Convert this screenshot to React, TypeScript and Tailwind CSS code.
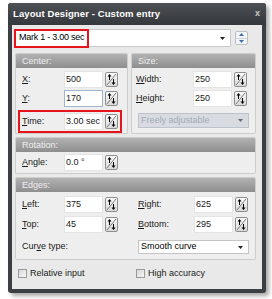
function Spin() {
  return (
    <div className="w-[13px] h-[15px] shrink-0 rounded-[2px] border border-[#8e8e8e] bg-gradient-to-b from-[#fbfbfb] to-[#d9d9d9]">
      <svg width="11" height="13" viewBox="0 0 11 13" className="block">
        <line x1="1" y1="12" x2="10" y2="1" stroke="#7a7a7a" strokeWidth="1" />
        <path d="M3.5 1 L1.5 3.5 L5.5 3.5 Z" fill="#000" />
        <line x1="3.5" y1="3" x2="3.5" y2="7" stroke="#000" strokeWidth="1" />
        <path d="M7.5 12 L5.5 9.5 L9.5 9.5 Z" fill="#000" />
        <line x1="7.5" y1="6" x2="7.5" y2="10" stroke="#000" strokeWidth="1" />
      </svg>
    </div>
  );
}

function Input({ value, focused }: { value: string; focused?: boolean }) {
  return (
    <div
      className={
        focused
          ? "w-[39px] h-[17px] bg-white border border-[#9fb6cf] pl-[1px] leading-[15px] whitespace-nowrap"
          : "w-[39px] h-[17px] bg-white border border-[#e4e4e4] pl-[1px] leading-[15px] whitespace-nowrap"
      }
    >
      {value}
    </div>
  );
}

function Row({
  label,
  u,
  rest,
  value,
  lw,
  focused,
}: {
  label?: string;
  u: string;
  rest: string;
  value: string;
  lw: string;
  focused?: boolean;
}) {
  return (
    <div className="flex items-center h-[17px]">
      <span className={lw}>
        {label}
        <span className="underline">{u}</span>
        {rest}
      </span>
      <Input value={value} focused={focused} />
      <div className="ml-[2px]">
        <Spin />
      </div>
    </div>
  );
}

function Header({ title }: { title: string }) {
  return (
    <div className="h-[14px] bg-gradient-to-b from-[#b2b2b2] to-[#8e8e8e] text-[#eeeeee] pl-[6px] leading-[14px]">
      {title}
    </div>
  );
}

function Combo({ text, disabled }: { text: string; disabled?: boolean }) {
  return (
    <div
      className={
        disabled
          ? "w-[111px] h-[15px] flex items-center justify-between pl-[2px] pr-[5px] border border-[#bcc3ca] bg-[#d8dce1] text-[#a3abb3]"
          : "w-[111px] h-[14px] flex items-center justify-between pl-[2px] pr-[5px] border border-[#c4c4c4] bg-white text-black"
      }
    >
      <span>{text}</span>
      <svg width="5" height="3" viewBox="0 0 5 3">
        <path d="M0 0 L5 0 L2.5 3 Z" fill={disabled ? "#6a6a6a" : "#222"} />
      </svg>
    </div>
  );
}

function Check({ label }: { label: string }) {
  return (
    <div className="flex items-center gap-[3px]">
      <div className="w-[9px] h-[9px] border border-[#9a9a9a] bg-gradient-to-br from-[#d6d6d6] to-[#f8f8f8]" />
      <span>{label}</span>
    </div>
  );
}

export default function App() {
  return (
    <div className="w-[272px] h-[299px] bg-white pl-[8px] pt-[3px] font-['Liberation_Sans',Arial,sans-serif] text-[9px] text-[#1a1a1a]">
      <div className="w-[258px] h-[290px] rounded-[3px] bg-[#3b3e43] shadow-[3px_3px_4px_rgba(0,0,0,0.35)] flex flex-col">
        {/* title bar */}
        <div className="h-[22px] flex items-center justify-between pl-[5px] pr-[6px] bg-gradient-to-b from-[#4d5055] to-[#34373b] rounded-t-[3px]">
          <span className="text-white font-bold text-[9.5px] tracking-[0.1px]">Layout Designer - Custom entry</span>
          <span className="text-[#c9cbcd] font-bold text-[9px]">x</span>
        </div>

        {/* client area */}
        <div className="mx-[4px] mb-[4px] flex-1 bg-[#e9e9e9] pt-[4px] flex flex-col">
          {/* top combo */}
          <div className="flex items-center">
            <div className="relative ml-[2px] w-[217px] h-[18px] bg-white border border-[#c9c9c9] flex items-center justify-between pl-[4px] pr-[5px]">
              <span className="text-black tracking-[-0.25px]">Mark 1 - 3.00 sec</span>
              <svg width="5" height="3" viewBox="0 0 5 3">
                <path d="M0 0 L5 0 L2.5 3 Z" fill="#222" />
              </svg>
              <div className="absolute -left-[1px] -top-[1px] w-[75px] h-[19px] border-2 border-[#e8141b]" />
            </div>
            <div className="ml-[4px] w-[13px] h-[14px] flex flex-col rounded-[2px] border border-[#b9c1c9] bg-[#f3f4f6]">
              <div className="flex-1 flex items-center justify-center border-b border-[#d0d5da]">
                <svg width="5" height="3" viewBox="0 0 5 3">
                  <path d="M0 3 L5 3 L2.5 0 Z" fill="#3d6fa8" />
                </svg>
              </div>
              <div className="flex-1 flex items-center justify-center">
                <svg width="5" height="3" viewBox="0 0 5 3">
                  <path d="M0 0 L5 0 L2.5 3 Z" fill="#3d6fa8" />
                </svg>
              </div>
            </div>
          </div>

          {/* center + size */}
          <div className="flex mt-[6px] ml-[3px] gap-[3px]">
            <div className="w-[113px] h-[81px] border border-[#cdcdcd] rounded-[2px] bg-[#eeeeee] overflow-hidden">
              <Header title="Center:" />
              <div className="flex flex-col pt-[3px] px-[1px]">
                <div className="pl-[5px]">
                  <Row u="X" rest=":" value="500" lw="w-[42px]" />
                </div>
                <div className="pl-[5px] mt-[2px]">
                  <Row u="Y" rest=":" value="170" lw="w-[42px]" focused />
                </div>
                <div className="mt-[3px] ml-[1px] w-[104px] border-2 border-[#e8141b] pl-[2px] py-[1px]">
                  <Row u="T" rest="ime:" value="3.00 sec" lw="w-[42px]" />
                </div>
              </div>
            </div>

            <div className="w-[125px] h-[81px] border border-[#cdcdcd] rounded-[2px] bg-[#eeeeee] overflow-hidden">
              <Header title="Size:" />
              <div className="flex flex-col pt-[3px] pl-[4px]">
                <Row u="W" rest="idth:" value="250" lw="w-[57px]" />
                <div className="mt-[2px]">
                  <Row u="H" rest="eight:" value="250" lw="w-[57px]" />
                </div>
                <div className="mt-[6px] ml-[2px]">
                  <Combo text="Freely adjustable" disabled />
                </div>
              </div>
            </div>
          </div>

          {/* rotation */}
          <div className="mt-[3px] ml-[3px] w-[241px] h-[37px] border border-[#cdcdcd] rounded-[2px] bg-[#eeeeee] overflow-hidden">
            <Header title="Rotation:" />
            <div className="pt-[2px] pl-[6px]">
              <Row u="A" rest="ngle:" value="0.0 °" lw="w-[42px]" />
            </div>
          </div>

          {/* edges */}
          <div className="mt-[3px] ml-[3px] w-[241px] h-[83px] border border-[#cdcdcd] rounded-[2px] bg-[#eeeeee] overflow-hidden">
            <Header title="Edges:" />
            <div className="flex pt-[4px]">
              <div className="w-[116px] pl-[6px] flex flex-col gap-[3px]">
                <Row u="L" rest="eft:" value="375" lw="w-[42px]" />
                <Row u="T" rest="op:" value="45" lw="w-[42px]" />
              </div>
              <div className="pl-[6px] flex flex-col gap-[3px]">
                <Row u="R" rest="ight:" value="625" lw="w-[56px]" />
                <Row u="B" rest="ottom:" value="295" lw="w-[56px]" />
              </div>
            </div>
            <div className="flex items-center mt-[7px]">
              <span className="w-[122px] pl-[6px]">
                Cur<span className="underline">v</span>e type:
              </span>
              <Combo text="Smooth curve" />
            </div>
          </div>

          {/* checkboxes */}
          <div className="flex mt-[7px] ml-[6px]">
            <div className="w-[118px]">
              <Check label="Relative input" />
            </div>
            <Check label="High accuracy" />
          </div>
        </div>
      </div>
    </div>
  );
}
